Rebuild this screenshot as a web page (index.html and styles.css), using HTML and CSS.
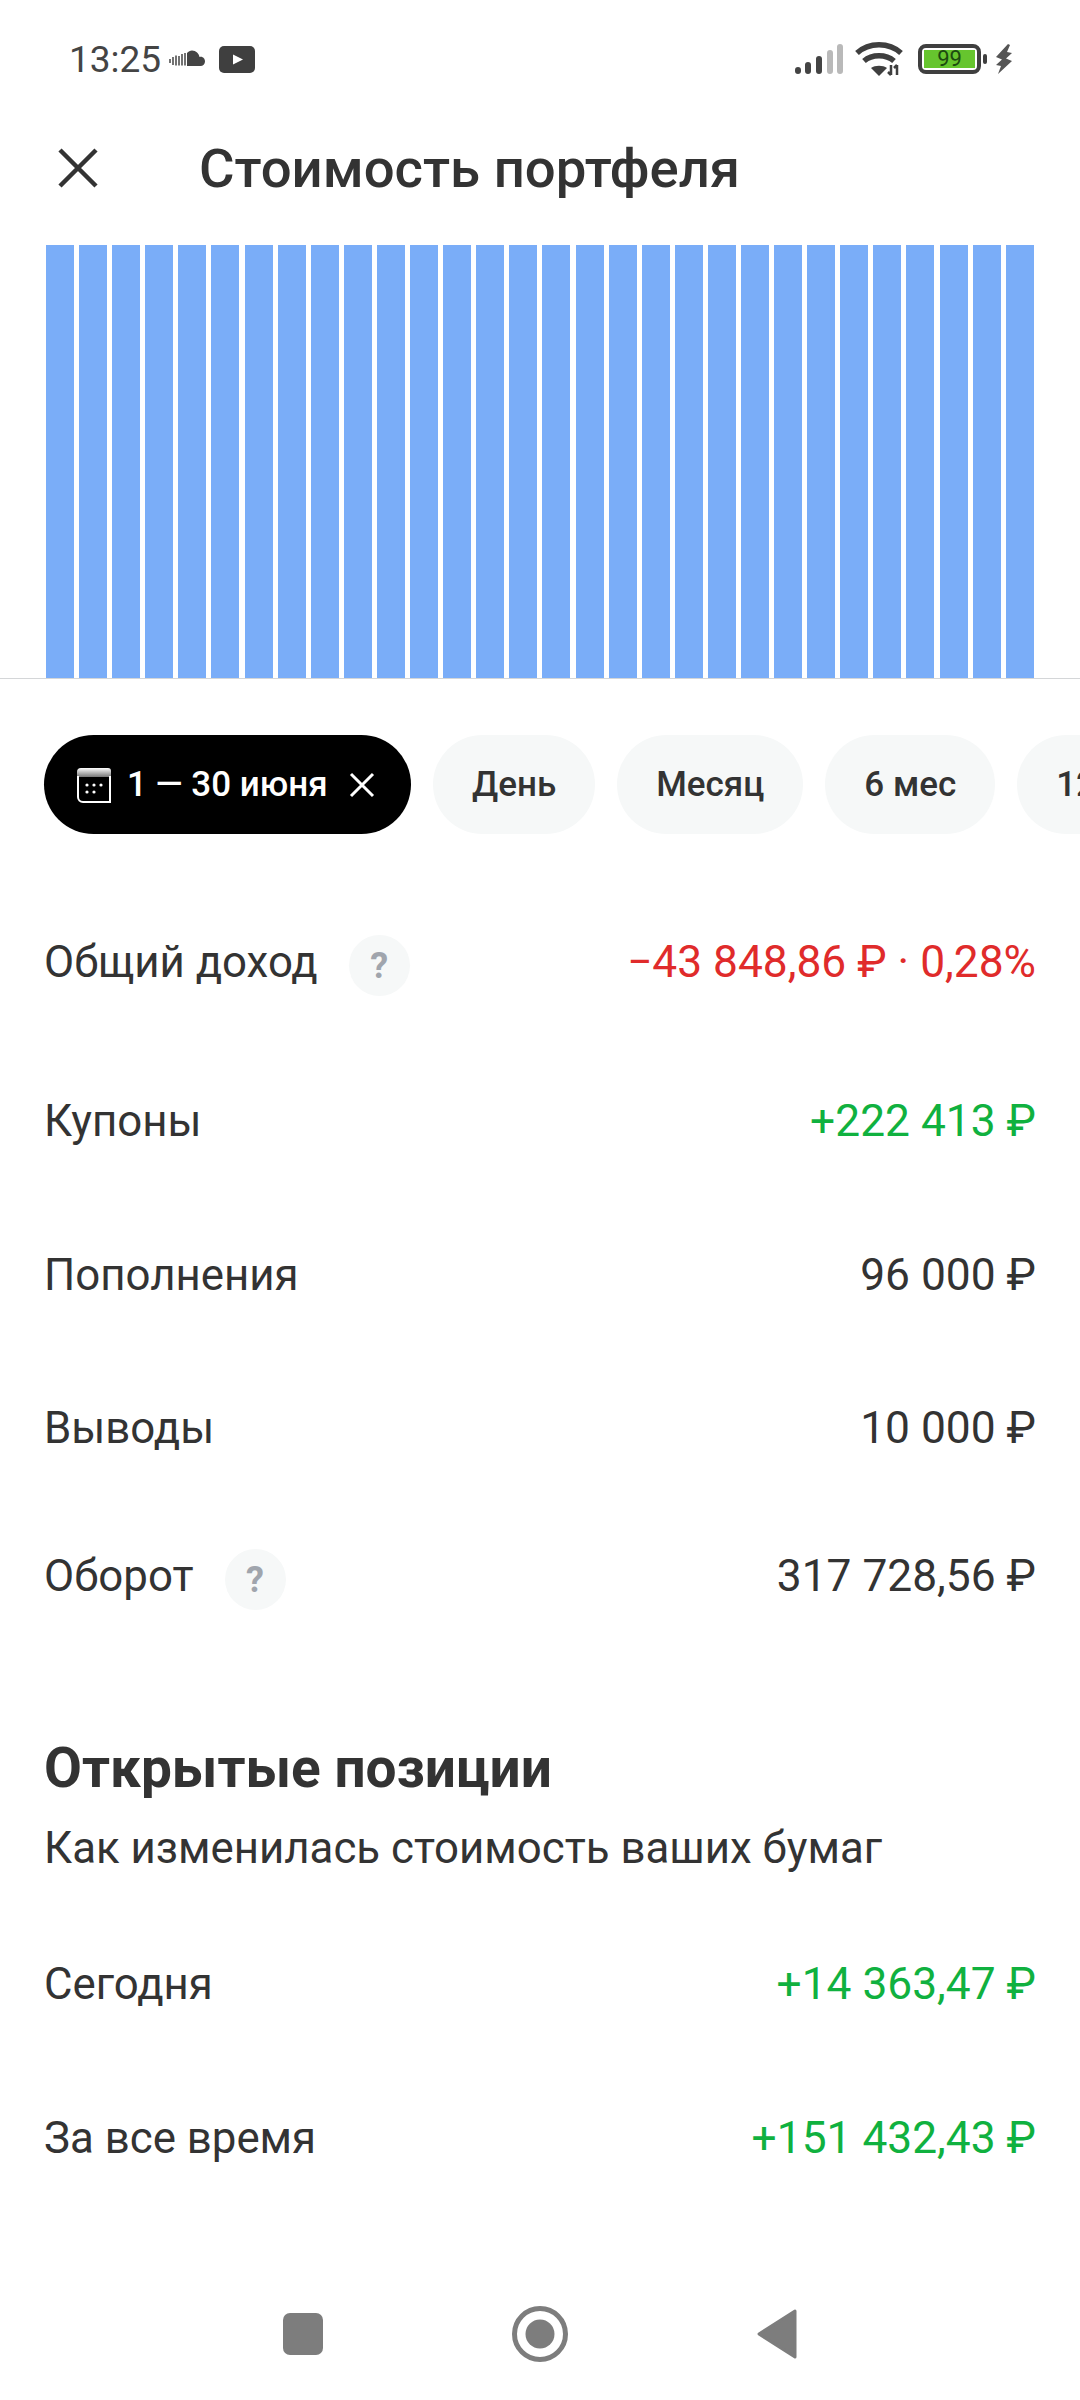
FILE: index.html
```html
<!DOCTYPE html>
<html lang="ru">
<head>
<meta charset="UTF-8" />
<title>Стоимость портфеля</title>
<link rel="stylesheet" href="styles.css">
</head>
<body>

<!-- STATUS BAR -->
<div class="status-bar">
  <div class="status-left">
    <span class="clock">13:25</span>
    <svg class="ic-cloud" viewBox="0 0 36 19" width="36" height="19">
      <path d="M1 9v4M4 7v8M7 5.500v10M10 6v9.500M13 4v11.500M16 3v12.500" stroke="#444" stroke-width="1.500" fill="none"/>
      <path d="M18 16V3c1.500-1.500 3-2.500 5-2.500 4 0 7 3 7.500 6.500 3-1 5.500 1.500 5.500 4.500 0 2.500-2 4.500-4.500 4.500z" fill="#444"/>
    </svg>
    <svg class="ic-yt" viewBox="0 0 36 27" width="36" height="27">
      <rect width="36" height="27" rx="5" fill="#3f3f3f"/>
      <path d="M14 8.500l10 5-10 5z" fill="#fff"/>
    </svg>
  </div>
  <div class="status-right">
    <svg viewBox="0 0 48 32" width="48" height="32">
      <g stroke-width="6" stroke-linecap="round" fill="none">
        <path d="M3 28v-1M13 28v-6M24 28v-12" stroke="#444"/>
        <path d="M35 28V10M45 28V4" stroke="#b9b9b9"/>
      </g>
    </svg>
    <svg class="ic-wifi" viewBox="0 0 48 36" width="48" height="36">
      <g stroke="#3f3f3f" stroke-width="5.500" fill="none">
        <path d="M2 12C14 1 34 1 46 12"/>
        <path d="M9 20c8-7 22-7 30 0"/>
      </g>
      <path d="M16 27c4-3 12-3 16 0l-8 8z" fill="#3f3f3f"/>
      <path d="M36 24v10M33 31l3 3M42 34V24M39 27l3-3" stroke="#3f3f3f" stroke-width="2.500" fill="none"/>
    </svg>
    <div class="battery-wrap">
      <div class="battery"><span class="battery-fill">99</span></div>
      <div class="battery-cap"></div>
    </div>
    <svg viewBox="0 0 20 32" width="20" height="32">
      <path d="M14 1L2 14l6 2.500L2 22l5 1-3 8 14-13-6-2.500 6-5.500-5-1 3-7z" fill="#555"/>
    </svg>
  </div>
</div>

<!-- HEADER -->
<header class="top-bar">
  <svg class="ic-close" viewBox="0 0 40 40" width="40" height="40">
    <path d="M2 2l36 36M38 2L2 38" stroke="#333" stroke-width="4.500" fill="none"/>
  </svg>
  <h1 class="title">Стоимость портфеля</h1>
</header>

<!-- CHART -->
<div class="chart">
  <div class="bar"></div><div class="bar"></div><div class="bar"></div><div class="bar"></div><div class="bar"></div>
  <div class="bar"></div><div class="bar"></div><div class="bar"></div><div class="bar"></div><div class="bar"></div>
  <div class="bar"></div><div class="bar"></div><div class="bar"></div><div class="bar"></div><div class="bar"></div>
  <div class="bar"></div><div class="bar"></div><div class="bar"></div><div class="bar"></div><div class="bar"></div>
  <div class="bar"></div><div class="bar"></div><div class="bar"></div><div class="bar"></div><div class="bar"></div>
  <div class="bar"></div><div class="bar"></div><div class="bar"></div><div class="bar"></div><div class="bar"></div>
</div>

<!-- PERIOD CHIPS -->
<div class="chips">
  <div class="chip chip-active">
    <svg viewBox="0 0 36 36" width="36" height="36">
      <defs>
        <linearGradient id="cal-top" x1="0" y1="0" x2="0" y2="1">
          <stop offset="0" stop-color="#fff"/>
          <stop offset="1" stop-color="#777"/>
        </linearGradient>
      </defs>
      <path d="M1 5a4 4 0 0 1 4-4h27a3 3 0 0 1 3 3v6H1z" fill="url(#cal-top)"/>
      <path d="M2 9v21a5 5 0 0 0 5 5h28M34 9v26" stroke="#fff" stroke-width="2" fill="none"/>
      <g fill="#fff">
        <circle cx="11" cy="18" r="1.600"/><circle cx="18" cy="18" r="1.600"/><circle cx="25" cy="18" r="1.600"/>
        <circle cx="11" cy="25" r="1.600"/><circle cx="18" cy="25" r="1.600"/>
      </g>
    </svg>
    <span>1 — 30 июня</span>
    <svg class="chip-x" viewBox="0 0 26 26" width="26" height="26">
      <path d="M2 2l22 22M24 2L2 24" stroke="#fff" stroke-width="3" fill="none"/>
    </svg>
  </div>
  <div class="chip">День</div>
  <div class="chip">Месяц</div>
  <div class="chip">6 мес</div>
  <div class="chip">12 мес</div>
</div>

<!-- STATS -->
<section class="rows">
  <div class="row row-hint">
    <div class="row-label">Общий доход <span class="hint">?</span></div>
    <div class="row-value red">−43 848,86 ₽ · 0,28%</div>
  </div>
  <div class="row">
    <div class="row-label">Купоны</div>
    <div class="row-value green">+222 413 ₽</div>
  </div>
  <div class="row">
    <div class="row-label">Пополнения</div>
    <div class="row-value">96 000 ₽</div>
  </div>
  <div class="row">
    <div class="row-label">Выводы</div>
    <div class="row-value">10 000 ₽</div>
  </div>
  <div class="row row-hint">
    <div class="row-label">Оборот <span class="hint">?</span></div>
    <div class="row-value">317 728,56 ₽</div>
  </div>
</section>

<section class="positions">
  <h2>Открытые позиции</h2>
  <p>Как изменилась стоимость ваших бумаг</p>
  <div class="row">
    <div class="row-label">Сегодня</div>
    <div class="row-value green">+14 363,47 ₽</div>
  </div>
  <div class="row">
    <div class="row-label">За все время</div>
    <div class="row-value green">+151 432,43 ₽</div>
  </div>
</section>

<!-- NAV BAR -->
<nav class="nav-bar">
  <svg viewBox="0 0 40 42" width="40" height="42"><rect width="40" height="42" rx="7" fill="#7d7d7d"/></svg>
  <svg viewBox="0 0 56 56" width="56" height="56">
    <circle cx="28" cy="28" r="25.500" stroke="#7d7d7d" stroke-width="5" fill="none"/>
    <circle cx="28" cy="28" r="14.500" fill="#7d7d7d"/>
  </svg>
  <svg viewBox="0 0 40 50" width="40" height="50"><path d="M38 2v46L2 25z" fill="#7d7d7d" stroke="#7d7d7d" stroke-width="3" stroke-linejoin="round"/></svg>
</nav>

</body>
</html>
```

FILE: styles.css
```css
* {
  box-sizing: border-box;
}
html, body {
  margin: 0;
  height: 2400px;
}
body {
  width: 1080px;
  overflow: hidden;
  background: #fff;
  color: #333;
  font-family: Roboto, "Noto Sans", sans-serif;
  font-size: 43.800px;
  display: flex;
  flex-direction: column;
}

/* Status bar */
.status-bar {
  height: 118px;
  padding: 0 66px 0 69px;
  display: flex;
  justify-content: space-between;
  align-items: center;
}
.status-left, .status-right {
  display: flex;
  align-items: center;
}
.clock {
  font-size: 37px;
  color: #444;
  margin-right: 8px;
}
.ic-yt {
  margin-left: 14px;
}
.ic-wifi {
  margin-left: 12px;
}
.battery-wrap {
  display: flex;
  align-items: center;
  margin-left: 15px;
  margin-right: 7px;
}
.battery {
  width: 63px;
  height: 30px;
  border: 4px solid #3f3f3f;
  border-radius: 8px;
  padding: 2px;
  display: flex;
}
.battery-fill {
  flex: 1;
  background: #66c52e;
  color: #1c4a10;
  font-size: 22px;
  line-height: 18px;
  text-align: center;
}
.battery-cap {
  width: 4px;
  height: 10px;
  margin-left: 2px;
  background: #3f3f3f;
  border-radius: 2px;
}

/* Header */
.top-bar {
  height: 100px;
  padding-left: 58px;
  display: flex;
  align-items: center;
}
.title {
  margin: 0 0 0 101px;
  font-size: 54.500px;
  font-weight: 500;
}

/* Chart */
.chart {
  margin-top: 27px;
  padding: 0 46px;
  flex: none;
  height: 434px;
  border-bottom: 1px solid #d4d6d8;
  display: flex;
  justify-content: space-between;
}
.bar {
  width: 28px;
  background: #7aadf8;
}

/* Chips */
.chips {
  margin-top: 56px;
  padding-left: 44px;
  display: flex;
  gap: 22px;
  flex: none;
}
.chip {
  height: 99px;
  padding: 0 39px;
  border-radius: 50px;
  background: #f6f8f8;
  font-size: 35px;
  font-weight: 500;
  display: flex;
  align-items: center;
  flex: none;
}
.chip-active {
  background: #000;
  color: #fff;
  padding: 0 32px;
  gap: 15px;
  width: 367px;
}
.chip-x {
  margin-left: 6px;
}

/* Rows */
.rows {
  margin-top: 57px;
  padding: 0 44px;
}
.row {
  height: 153.500px;
  display: flex;
  justify-content: space-between;
  align-items: center;
}
.row-hint {
  padding-bottom: 12px;
}
.row-label {
  display: flex;
  align-items: center;
  gap: 31px;
}
.row-value {
  font-size: 44.300px;
}
.hint {
  width: 61px;
  height: 61px;
  margin-top: 8px;
  border-radius: 50%;
  background: #f6f8f8;
  color: #a0a5ad;
  font-size: 36px;
  font-weight: 700;
  display: flex;
  align-items: center;
  justify-content: center;
}
.red {
  color: #e02b2b;
}
.green {
  color: #10b13f;
}

/* Positions */
.positions {
  margin-top: 79px;
  padding: 0 44px;
}
.positions h2 {
  margin: 0;
  font-size: 55px;
  font-weight: 700;
  line-height: 60px;
}
.positions p {
  margin: 26px 0 36px;
  line-height: 48px;
}

/* Nav bar */
.nav-bar {
  position: absolute;
  top: 2306px;
  left: 283px;
  width: 514px;
  display: flex;
  justify-content: space-between;
  align-items: center;
}
```
